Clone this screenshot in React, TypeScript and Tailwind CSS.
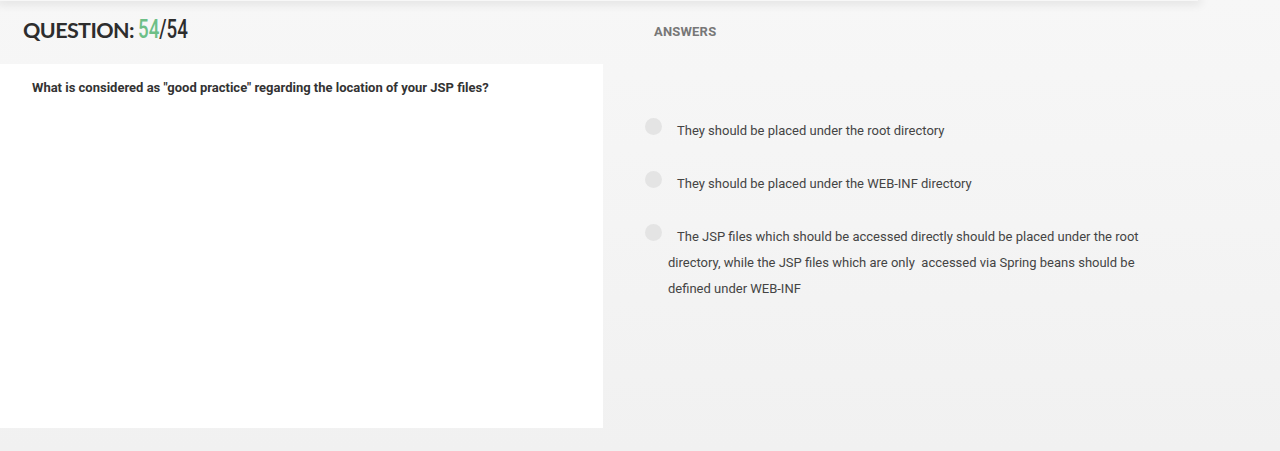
import React from "react";

const answers = [
  "They should be placed under the root directory",
  "They should be placed under the WEB-INF directory",
  "The JSP files which should be accessed directly should be placed under the root directory, while the JSP files which are only\u00a0 accessed via Spring beans should be defined under WEB-INF",
];

export default function App() {
  return (
    <div className="w-[1280px] h-[451px] overflow-hidden bg-gradient-to-b from-[#f7f7f7] to-[#f1f1f1] font-['Roboto',sans-serif]">
      <div className="w-[1198px] h-px bg-[#f7f7f7] shadow-[0_0_10px_3px_rgba(0,0,0,0.10)]" />
      <div className="flex">
        <div className="w-[603px]">
          <div className="h-[63px] pl-[23px] pt-[13px]">
            <h1 className="font-['Lato',sans-serif] font-bold text-[21.5px] leading-[30px] tracking-[-0.6px] text-[#2d2d2d] whitespace-nowrap">
              QUESTION:{" "}
              <span className="inline-block origin-left scale-x-[0.72] tracking-normal font-['Roboto',sans-serif] font-medium text-[26px]">
                <span className="text-[#6dbf87]">54</span>/54
              </span>
            </h1>
          </div>
          <div className="bg-white h-[364px] pl-[32px] pt-[15px]">
            <p className="text-[13px] font-bold text-[#333] leading-[18px]">
              What is considered as "good practice" regarding the location of your JSP files?
            </p>
          </div>
        </div>
        <div className="flex-1 pl-[51px] pt-[22px]">
          <h2 className="text-[13px] font-bold text-[#777] tracking-[0.2px] leading-[18px]">ANSWERS</h2>
          <ul className="mt-[77px] -ml-[9px] flex flex-col gap-[27px]">
            {answers.map((a) => (
              <li key={a} className="flex items-start">
                <span className="w-[17px] h-[17px] shrink-0 rounded-full bg-[#e4e4e4]" />
                <p className="ml-[6px] w-[482px] indent-[9px] text-[13px] leading-[26px] text-[#444]">{a}</p>
              </li>
            ))}
          </ul>
        </div>
      </div>
    </div>
  );
}
